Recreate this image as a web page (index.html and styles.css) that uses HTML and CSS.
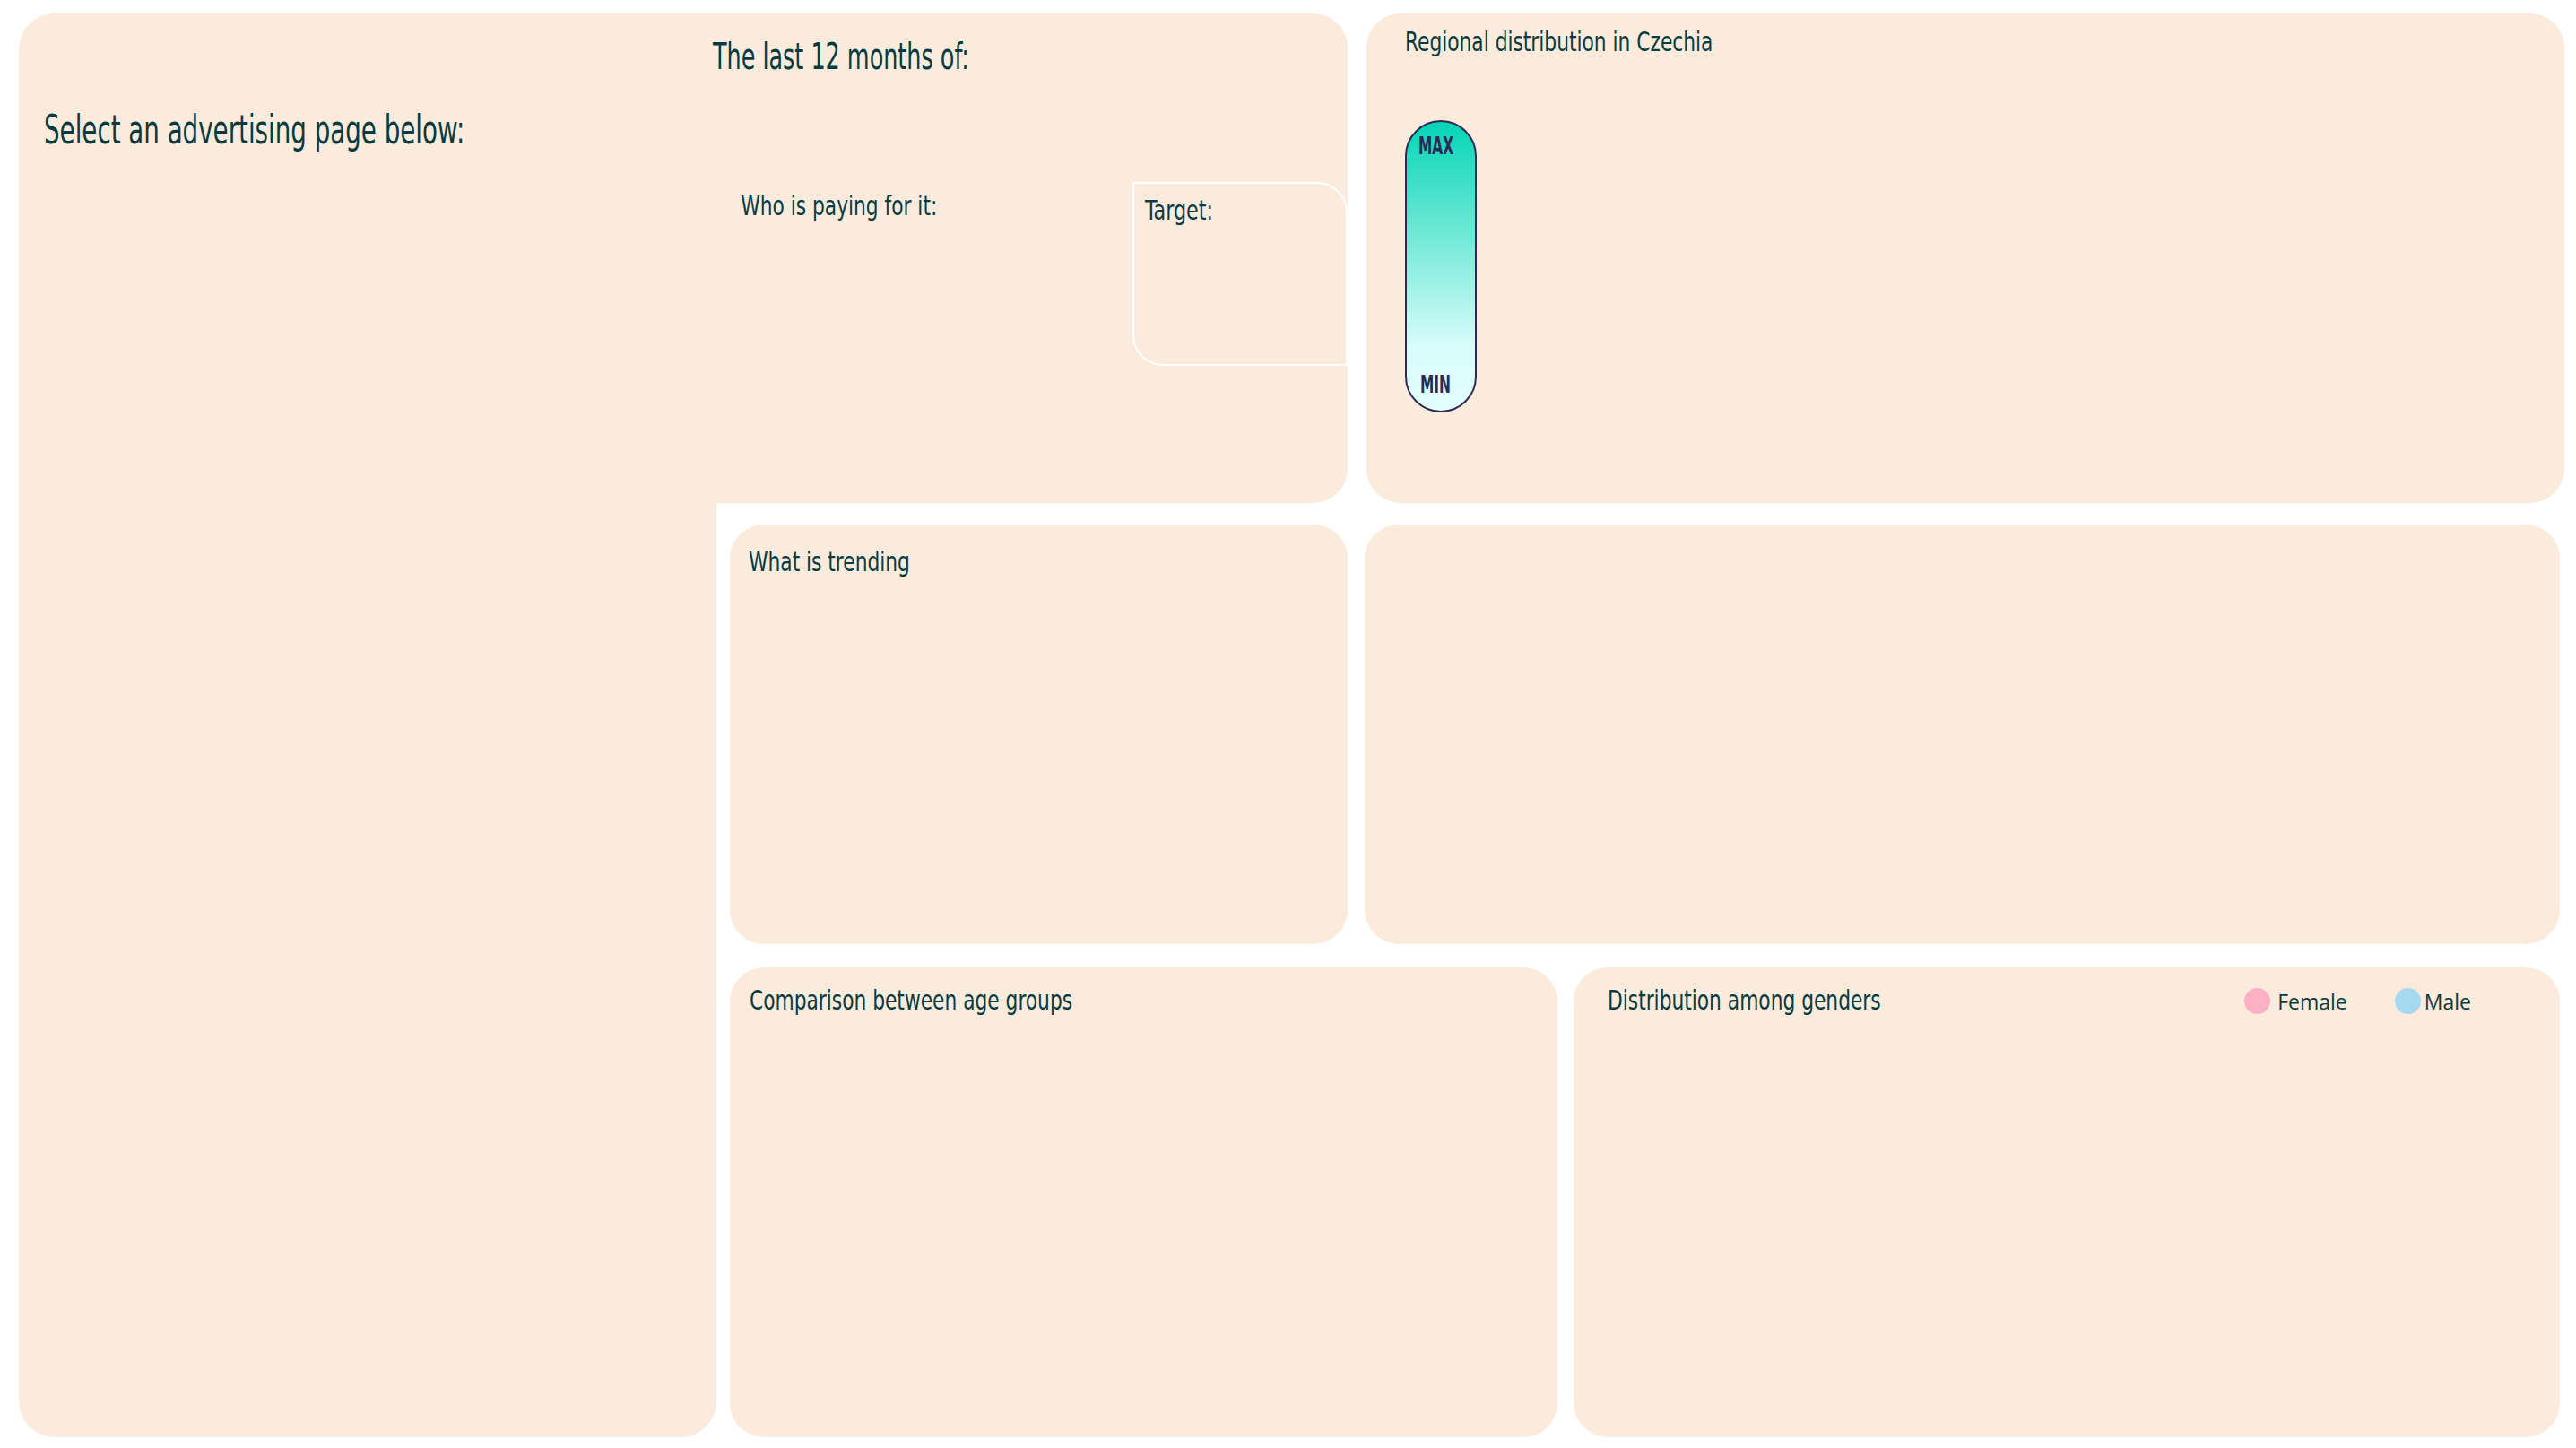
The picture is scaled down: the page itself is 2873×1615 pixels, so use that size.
FILE: index.html
```html
<!DOCTYPE html>
<html lang="en">
<head>
<meta charset="utf-8">
<title>Advertising dashboard</title>
<link rel="stylesheet" href="styles.css">
</head>
<body>
<main class="dash">
  <div class="side"></div>

  <div class="toprow">
    <section class="panel intro">
      <div class="intro-left">
        <h1 class="select">Select an advertising page below:</h1>
      </div>
      <div class="intro-right">
        <h2 class="period">The last 12 months of:</h2>
        <div class="who-row">
          <h3 class="sub who">Who is paying for it:</h3>
          <div class="target"><h3 class="sub">Target:</h3></div>
        </div>
      </div>
    </section>
    <section class="panel region">
      <h3 class="sub">Regional distribution in Czechia</h3>
      <div class="scale">
        <span class="lbl">MAX</span>
        <span class="lbl lbl-min">MIN</span>
      </div>
    </section>
  </div>

  <div class="midrow">
    <section class="panel trending"><h3 class="sub">What is trending</h3></section>
    <section class="panel map"></section>
  </div>

  <div class="botrow">
    <section class="panel age"><h3 class="sub">Comparison between age groups</h3></section>
    <section class="panel genders">
      <div class="gen-head">
        <h3 class="sub">Distribution among genders</h3>
        <div class="legend">
          <span class="item"><i class="dot female"></i>Female</span>
          <span class="item male-item"><i class="dot male"></i>Male</span>
        </div>
      </div>
    </section>
  </div>
</main>
</body>
</html>
```

FILE: styles.css
```css
* { box-sizing: border-box; }

html, body {
  margin: 0;
  padding: 0;
  background: #ffffff;
}

body {
  font-family: "DejaVu Sans Condensed", "Liberation Sans", sans-serif;
  color: #073b41;
}

h1, h2, h3 {
  margin: 0;
  font-weight: normal;
  line-height: 1.2;
  white-space: nowrap;
  transform-origin: 0 50%;
}

.dash {
  display: grid;
  grid-template-columns: 778px 1fr;
  grid-template-rows: 546px 24px 468px 26px 524px;
  column-gap: 15px;
  padding: 15px 13px 12px 21px;
  width: 2873px;
  height: 1615px;
}

.panel {
  background: #fbebdc;
  border-radius: 38px;
}

.side {
  grid-column: 1;
  grid-row: 1 / 6;
  background: #fbebdc;
  border-radius: 40px 0 40px 40px;
}

/* top row */
.toprow {
  grid-column: 1 / 3;
  grid-row: 1;
  display: flex;
  gap: 21px;
}

.intro {
  width: 1482px;
  display: flex;
  border-radius: 40px 38px 38px 0;
}

.intro-left {
  width: 774px;
  padding: 104px 0 0 28px;
}

.select {
  font-size: 44px;
  transform: scaleX(0.70);
}

.intro-right {
  flex: 1;
  padding: 24px 0 0 0;
  display: flex;
  flex-direction: column;
}

.period {
  font-size: 41px;
  transform: scaleX(0.69);
}

.who-row {
  display: flex;
  margin-top: 115px;
}

.sub {
  font-size: 31px;
  transform: scaleX(0.78);
}

.who {
  padding: 8px 0 0 40px;
  width: 468px;
}

.target {
  width: 240px;
  height: 205px;
  border: 2px solid #ffffff;
  border-radius: 0 34px 0 34px;
  padding: 11px 0 0 12px;
}

.target .sub {
  transform: scaleX(0.8);
}

.region {
  flex: 1;
  padding: 13px 0 0 43px;
}

.scale {
  margin-top: 69px;
  width: 80px;
  height: 326px;
  border: 2px solid #2e2855;
  border-radius: 40px;
  background: linear-gradient(to bottom, #05d5b6 0%, #8eeee0 50%, #d8fdfb 78%, #e3fffe 100%);
  display: flex;
  flex-direction: column;
  justify-content: space-between;
  align-items: flex-start;
  padding: 12px 0 13px 13px;
  color: #2d2a55;
}

.lbl {
  display: block;
  font-size: 26px;
  line-height: 1.2;
  font-weight: bold;
  transform: scaleX(0.66);
  transform-origin: 0 50%;
}

.lbl-min {
  margin-left: 2px;
}

/* middle row */
.midrow {
  grid-column: 2;
  grid-row: 3;
  display: flex;
  gap: 19px;
  padding-right: 5px;
}

.trending {
  width: 689px;
  padding: 23px 0 0 21px;
}

.map {
  flex: 1;
}

/* bottom row */
.botrow {
  grid-column: 2;
  grid-row: 5;
  display: flex;
  gap: 18px;
  padding-right: 5px;
}

.age {
  width: 923px;
  padding: 18px 0 0 22px;
}

.genders {
  flex: 1;
  padding: 18px 99px 0 38px;
}

.gen-head {
  display: flex;
  justify-content: space-between;
  align-items: center;
}

.legend {
  display: flex;
  align-items: center;
  font-family: "Open Sans", "Noto Sans", sans-serif;
  font-size: 23px;
  color: #073b41;
  padding-top: 2px;
}

.item {
  display: flex;
  align-items: center;
}

.male-item {
  margin-left: 53px;
}

.dot {
  display: inline-block;
  width: 29px;
  height: 29px;
  border-radius: 50%;
  margin-right: 8px;
}

.male-item .dot {
  margin-right: 4px;
}

.female { background: #f9b1c3; }
.male { background: #a6d8f0; }
```
